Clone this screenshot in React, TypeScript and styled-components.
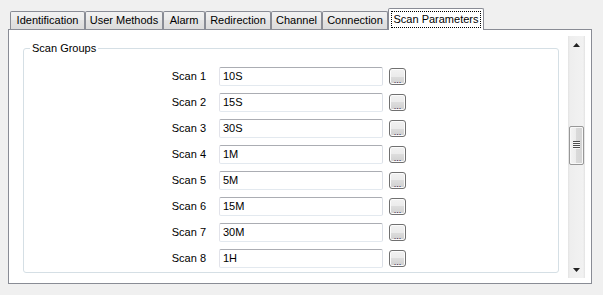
import React from "react"
import styled, { createGlobalStyle } from "styled-components"

const tabs = [
  { title: "Identification", width: 75 },
  { title: "User Methods", width: 78 },
  { title: "Alarm", width: 42 },
  { title: "Redirection", width: 66 },
  { title: "Channel", width: 51 },
  { title: "Connection", width: 66 },
  { title: "Scan Parameters", width: 96 },
]

const scans = ["10S", "15S", "30S", "1M", "5M", "15M", "30M", "1H"]

// scroll position of the viewport, 0..1
const scrollRatio = 0.426

const App: React.FC = () => {
  const activeTab = tabs.length - 1
  const thumbTrack = 208 - 39

  return (
    <>
      <GlobalStyle />
      <Window>
        <TabStrip>
          {tabs.map((tab, index) => (
            <Tab key={tab.title} $width={tab.width} $active={index === activeTab}>
              {index === activeTab ? <FocusRect>{tab.title}</FocusRect> : tab.title}
            </Tab>
          ))}
        </TabStrip>
        <Panel>
          <Viewport>
            <GroupBox>
              <Legend>Scan Groups</Legend>
              {scans.map((value, index) => (
                <Row key={index}>
                  <Label>Scan {index + 1}</Label>
                  <Field value={value} readOnly />
                  <BrowseButton>...</BrowseButton>
                </Row>
              ))}
            </GroupBox>
          </Viewport>
          <ScrollBar>
            <ArrowButton>
              <svg width="7" height="4" viewBox="0 0 7 4">
                <path d="M3.5 0 L7 4 L0 4 Z" fill="#222" />
              </svg>
            </ArrowButton>
            <Track>
              <Thumb style={{ top: Math.round(thumbTrack * scrollRatio) + 1 }}>
                <svg width="7" height="9" viewBox="0 0 7 9">
                  <path d="M0 0.5h7M0 2.5h7M0 4.5h7M0 6.5h7" stroke="#4d4d4d" strokeWidth="1" />
                  <path d="M0 1.5h7M0 3.5h7M0 5.5h7M0 7.5h7" stroke="#fafafa" strokeWidth="1" />
                </svg>
              </Thumb>
            </Track>
            <ArrowButton>
              <svg width="7" height="4" viewBox="0 0 7 4">
                <path d="M0 0 L7 0 L3.5 4 Z" fill="#222" />
              </svg>
            </ArrowButton>
          </ScrollBar>
        </Panel>
      </Window>
    </>
  )
}

const GlobalStyle = createGlobalStyle`
  html, body {
    margin: 0;
    padding: 0;
    background: #f0f0f0;
  }
  body {
    font-family: "Liberation Sans", Arial, sans-serif;
    font-size: 11px;
    color: #000;
  }
`

const Window = styled.div`
  width: 603px;
  height: 295px;
  padding-top: 8px;
  box-sizing: border-box;
  background: #f0f0f0;
`

const TabStrip = styled.div`
  display: flex;
  align-items: flex-end;
  height: 21px;
  padding-left: 10px;
  position: relative;
  z-index: 1;
`

const Tab = styled.div<{ $width: number; $active: boolean }>`
  box-sizing: border-box;
  width: ${props => props.$width}px;
  height: ${props => (props.$active ? 22 : 18)}px;
  margin-bottom: ${props => (props.$active ? -1 : 0)}px;
  border: 1px solid #898c95;
  border-bottom: none;
  border-radius: 2px 2px 0 0;
  background: ${props =>
    props.$active ? "#fff" : "linear-gradient(#f2f2f2, #ebebeb 50%, #e3e3e3 50%, #dcdcdc)"};
  display: flex;
  align-items: ${props => (props.$active ? "flex-start" : "center")};
  justify-content: center;
  padding-top: ${props => (props.$active ? 2 : 0)}px;
  white-space: nowrap;
  line-height: 13px;
`

const FocusRect = styled.span`
  display: block;
  box-sizing: border-box;
  width: 90px;
  height: 17px;
  border: 1px dotted #000;
  text-align: center;
  line-height: 14px;
`

const Panel = styled.div`
  box-sizing: border-box;
  width: 584px;
  height: 255px;
  margin-left: 8px;
  border: 1px solid #898c95;
  background: #fff;
  padding: 6px 6px 5px 14px;
  display: flex;
`

const Viewport = styled.div`
  flex: 1;
  overflow: hidden;
`

const GroupBox = styled.fieldset`
  box-sizing: border-box;
  width: 536px;
  height: 231px;
  margin: 6px 0 0 0;
  padding: 8px 0 0 0;
  border: 1px solid #d5dfe5;
  border-radius: 3px;
`

const Legend = styled.legend`
  margin-left: 6px;
  padding: 0 2px;
  line-height: 13px;
`

const Row = styled.div`
  display: flex;
  align-items: center;
  height: 26px;
`

const Label = styled.span`
  width: 182px;
  padding-right: 2px;
  text-align: right;
`

const Field = styled.input`
  box-sizing: border-box;
  width: 164px;
  height: 19px;
  margin: 0 0 0 11px;
  padding: 0 3px;
  border: 1px solid;
  border-color: #abadb3 #dbdfe6 #e3e9ef #e2e3ea;
  border-radius: 2px;
  font: inherit;
  color: #000;
  outline: none;
`

const BrowseButton = styled.div`
  box-sizing: border-box;
  width: 17px;
  height: 17px;
  margin-left: 6px;
  border: 1px solid #707070;
  border-radius: 3px;
  background: linear-gradient(#f2f2f2, #ebebeb 50%, #dddddd 50%, #cfcfcf);
  box-shadow: inset 0 0 0 1px #fcfcfc;
  text-align: center;
  font-size: 9px;
  line-height: 22px;
  overflow: hidden;
  color: #3a1a4a;
`

const ScrollBar = styled.div`
  width: 17px;
  display: flex;
  flex-direction: column;
  background: linear-gradient(90deg, #e3e3e3, #eeeeee 12%, #f2f2f2 88%, #e3e3e3);
`

const ArrowButton = styled.div`
  height: 17px;
  display: flex;
  align-items: center;
  justify-content: center;
`

const Track = styled.div`
  flex: 1;
  position: relative;
`

const Thumb = styled.div`
  position: absolute;
  left: 1px;
  right: 1px;
  height: 39px;
  box-sizing: border-box;
  border: 1px solid #979797;
  border-radius: 2px;
  background: linear-gradient(90deg, #f3f3f3, #ebebeb 50%, #d9d9d9 50%, #d4d4d4);
  box-shadow: inset 0 0 0 1px #f8f8f8;
  display: flex;
  align-items: center;
  justify-content: center;
`

export default App
